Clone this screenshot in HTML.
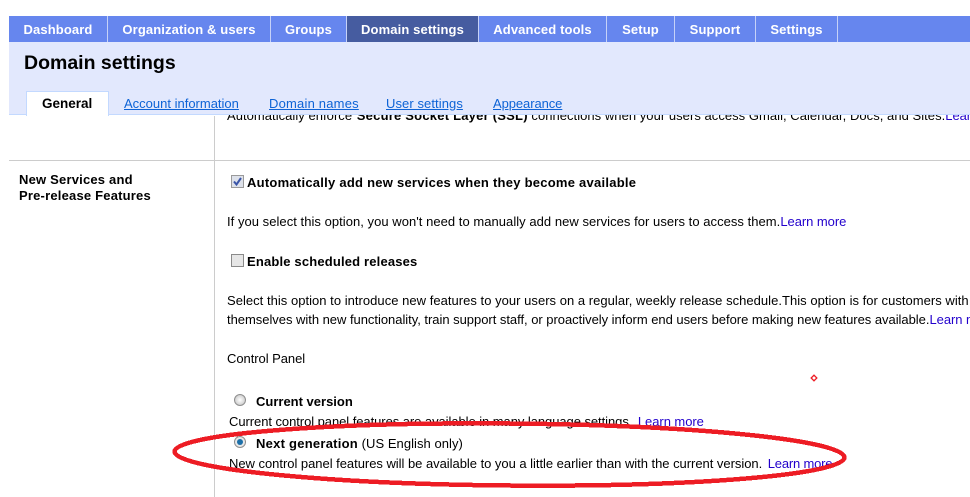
<!DOCTYPE html>
<html><head><meta charset="utf-8"><style>
html,body{margin:0;padding:0;background:#fff}
body{width:970px;height:497px;overflow:hidden;position:relative;font-family:"Liberation Sans",sans-serif;font-size:13px;color:#000}
#w{position:absolute;left:0;top:0;width:970px;height:497px;overflow:hidden}
.a{position:absolute;white-space:nowrap}
.t{position:absolute;top:16px;height:26px;line-height:27px;background:#6686ee;color:#fff;font-weight:bold;font-size:13px;letter-spacing:.12px;text-align:center;white-space:nowrap}
.s{position:absolute;top:16px;width:1px;height:26px;background:#c6d2f8}
.l{color:#0d63d6;text-decoration:underline;font-size:13px;top:95px;line-height:18px}
.x{font-size:13px;line-height:16px;letter-spacing:.04px}
.h{font-weight:bold;font-size:13px;line-height:16px;letter-spacing:.25px}
.m{color:#2200cc;letter-spacing:-.05px}
</style></head><body><div id="w">
<div class="a x" style="left:227px;top:108px">Automatically enforce <b style="letter-spacing:.22px;margin-left:1px">Secure Socket Layer (SSL)</b> connections when your users access Gmail, Calendar, Docs, and Sites.<span class="m">Learn more</span></div>
<div class="a" style="left:9px;top:16px;width:961px;height:26px;background:#6686ee"></div>
<div class="t" style="left:9px;width:98px">Dashboard</div>
<div class="t" style="left:108px;width:162px">Organization &amp; users</div>
<div class="t" style="left:271px;width:75px">Groups</div>
<div class="t" style="left:347px;width:131px;background:#465ca0">Domain settings</div>
<div class="t" style="left:479px;width:127px">Advanced tools</div>
<div class="t" style="left:607px;width:67px">Setup</div>
<div class="t" style="left:675px;width:80px">Support</div>
<div class="t" style="left:756px;width:81px">Settings</div>
<div class="s" style="left:107px"></div><div class="s" style="left:270px"></div><div class="s" style="left:346px"></div><div class="s" style="left:478px"></div><div class="s" style="left:606px"></div><div class="s" style="left:674px"></div><div class="s" style="left:755px"></div><div class="s" style="left:837px"></div>
<div class="a" style="left:9px;top:42px;width:961px;height:72px;background:#e2e8fd;border-bottom:1px solid #c3d9ff"></div>
<div class="a" style="left:24px;top:51px;font-size:19.5px;line-height:24px;font-weight:bold">Domain settings</div>
<div class="a" style="left:26px;top:91px;width:81px;height:24px;background:#fff;border:1px solid #c3d9ff;border-bottom:none"></div>
<div class="a" style="left:42px;top:95px;font-size:13.5px;line-height:18px;font-weight:bold">General</div>
<div class="a l" style="left:124px">Account information</div>
<div class="a l" style="left:269px;letter-spacing:.2px">Domain names</div>
<div class="a l" style="left:386px;letter-spacing:.08px">User settings</div>
<div class="a l" style="left:493px;letter-spacing:-.08px">Appearance</div>
<div class="a" style="left:214px;top:116px;width:1px;height:381px;background:#ccc"></div>
<div class="a" style="left:9px;top:160px;width:961px;height:1px;background:#ccc"></div>
<div class="a h" style="left:19px;top:172px;letter-spacing:.2px">New Services and<br>Pre-release Features</div>
<div class="a" style="left:231px;top:175px;width:11px;height:11px;border:1px solid #9a9a9a;background:#dde1ea"></div>
<svg class="a" style="left:231px;top:175px" width="13" height="13"><path d="M3 6.5L5.5 9.5L10 3" fill="none" stroke="#3a55a8" stroke-width="2"/></svg>
<div class="a h" style="left:247px;top:175px">Automatically add new services when they become available</div>
<div class="a x" style="left:227px;top:214px">If you select this option, you won't need to manually add new services for users to access them.<span class="m">Learn more</span></div>
<div class="a" style="left:231px;top:254px;width:11px;height:11px;border:1px solid #8a8a8a;background:#e6e6e6"></div>
<div class="a h" style="left:247px;top:254px;letter-spacing:.17px">Enable scheduled releases</div>
<div class="a x" style="left:227px;top:293px;letter-spacing:.03px">Select this option to introduce new features to your users on a regular, weekly release schedule.This option is for customers with small domains who want to familiarize</div>
<div class="a x" style="left:227px;top:312px;letter-spacing:-.03px">themselves with new functionality, train support staff, or proactively inform end users before making new features available.<span class="m">Learn more</span></div>
<div class="a x" style="left:227px;top:351px;letter-spacing:-.05px">Control Panel</div>
<svg class="a" style="left:233px;top:393px" width="14" height="14"><defs><radialGradient id="g"><stop offset="0" stop-color="#fff"/><stop offset="1" stop-color="#ccc"/></radialGradient></defs><circle cx="7" cy="7" r="5.5" fill="url(#g)" stroke="#8f8f8f"/></svg>
<div class="a" style="left:256px;top:394px;font-weight:bold;font-size:13px;line-height:16px">Current version</div>
<div class="a x" style="left:229px;top:414px;letter-spacing:-.06px">Current control panel features are available in many language settings. <span class="m" style="margin-left:2px">Learn more</span></div>
<svg class="a" style="left:233px;top:435px" width="14" height="14"><circle cx="7" cy="7" r="5.5" fill="#e8e8e8" stroke="#8f8f8f"/><circle cx="7" cy="7" r="3" fill="#1c6fa8"/></svg>
<div class="a" style="left:256px;top:436px;font-size:13px;line-height:16px"><b style="letter-spacing:.25px">Next generation</b> <span style="letter-spacing:.05px">(US English only)</span></div>
<div class="a x" style="left:229px;top:456px;letter-spacing:-.03px">New control panel features will be available to you a little earlier than with the current version. <span class="m" style="margin-left:2px;letter-spacing:-.2px">Learn more</span></div>
<svg class="a" style="left:0;top:0" width="970" height="497"><ellipse cx="509.5" cy="454.5" rx="335" ry="31" transform="rotate(.5 509.5 454.5)" fill="none" stroke="#ed1c24" stroke-width="4.5" shape-rendering="crispEdges"/><rect x="812" y="376" width="4" height="4" transform="rotate(45 814 378)" fill="#fff" stroke="#ed1c24" stroke-width="1.3"/></svg>
</div></body></html>
